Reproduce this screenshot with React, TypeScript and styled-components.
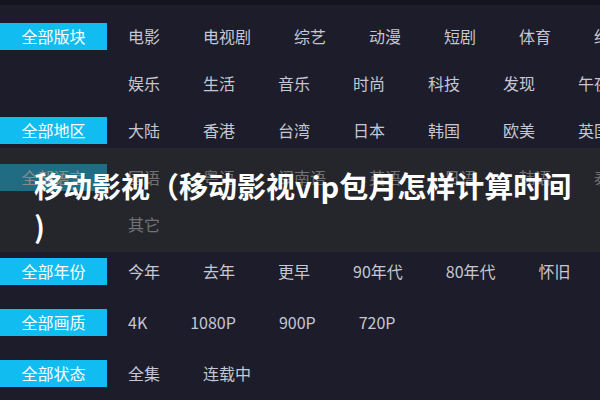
import React from "react";
import styled, { createGlobalStyle } from "styled-components";

const GlobalStyle = createGlobalStyle`
  html, body {
    margin: 0;
    padding: 0;
    background: #1c1c2b;
    overflow: hidden;
  }
  body {
    font-family: "Noto Sans CJK SC", "Noto Sans", sans-serif;
  }
`;

const Page = styled.div`
  position: relative;
  width: 600px;
  height: 400px;
  overflow: hidden;
  background: #1c1c2b;
`;

const TopStrip = styled.div`
  height: 5px;
  background: #141420;
`;

const FilterList = styled.div`
  display: flex;
  flex-direction: column;
  padding-top: 8px;
  width: 700px;
`;

const Group = styled.div<{ $mt?: number }>`
  display: flex;
  align-items: flex-start;
  margin-top: ${(p) => p.$mt ?? 0}px;
`;

const Label = styled.div`
  flex: none;
  width: 107px;
  height: 27px;
  margin-top: 10px;
  background: #10bcf0;
  color: #ffffff;
  font-size: 16px;
  line-height: 27px;
  text-align: center;
`;

const Items = styled.div`
  display: flex;
  flex-wrap: wrap;
  column-gap: 43px;
  width: 540px;
  margin-left: 21px;
`;

const Item = styled.span`
  height: 47px;
  line-height: 47px;
  font-size: 16px;
  color: #c6c7d2;
  white-space: nowrap;
`;

const Overlay = styled.div`
  position: absolute;
  top: 148px;
  left: 0;
  right: 0;
  height: 104px;
  box-sizing: border-box;
  padding: 17px 20px 0 34px;
  background: rgba(45, 46, 44, 0.56);
`;

const Title = styled.h1`
  margin: 0;
  color: #ffffff;
  font-family: "Noto Sans CJK SC", "Noto Sans", sans-serif;
  font-weight: 700;
  font-size: 29px;
  line-height: 40px;
  letter-spacing: 0;
`;

const groups: { label: string; items: string[]; mt?: number }[] = [
  {
    label: "全部版块",
    items: ["电影", "电视剧", "综艺", "动漫", "短剧", "体育", "纪录片", "娱乐", "生活", "音乐", "时尚", "科技", "发现", "午夜"],
  },
  { label: "全部地区", items: ["大陆", "香港", "台湾", "日本", "韩国", "欧美", "英国"] },
  { label: "全部语言", items: ["国语", "粤语", "闽南语", "英语", "日语", "韩语", "泰语", "其它"] },
  { label: "全部年份", items: ["今年", "去年", "更早", "90年代", "80年代", "怀旧"] },
  { label: "全部画质", items: ["4K", "1080P", "900P", "720P"], mt: 4 },
  { label: "全部状态", items: ["全集", "连载中"], mt: 4 },
];

export default function App() {
  return (
    <>
      <GlobalStyle />
      <Page>
        <TopStrip />
        <FilterList>
          {groups.map((g) => (
            <Group key={g.label} $mt={g.mt}>
              <Label>{g.label}</Label>
              <Items>
                {g.items.map((it) => (
                  <Item key={it}>{it}</Item>
                ))}
              </Items>
            </Group>
          ))}
        </FilterList>
        <Overlay>
          <Title>
            移动影视（移动影视vip包月怎样计算时间
            <br />)
          </Title>
        </Overlay>
      </Page>
    </>
  );
}
